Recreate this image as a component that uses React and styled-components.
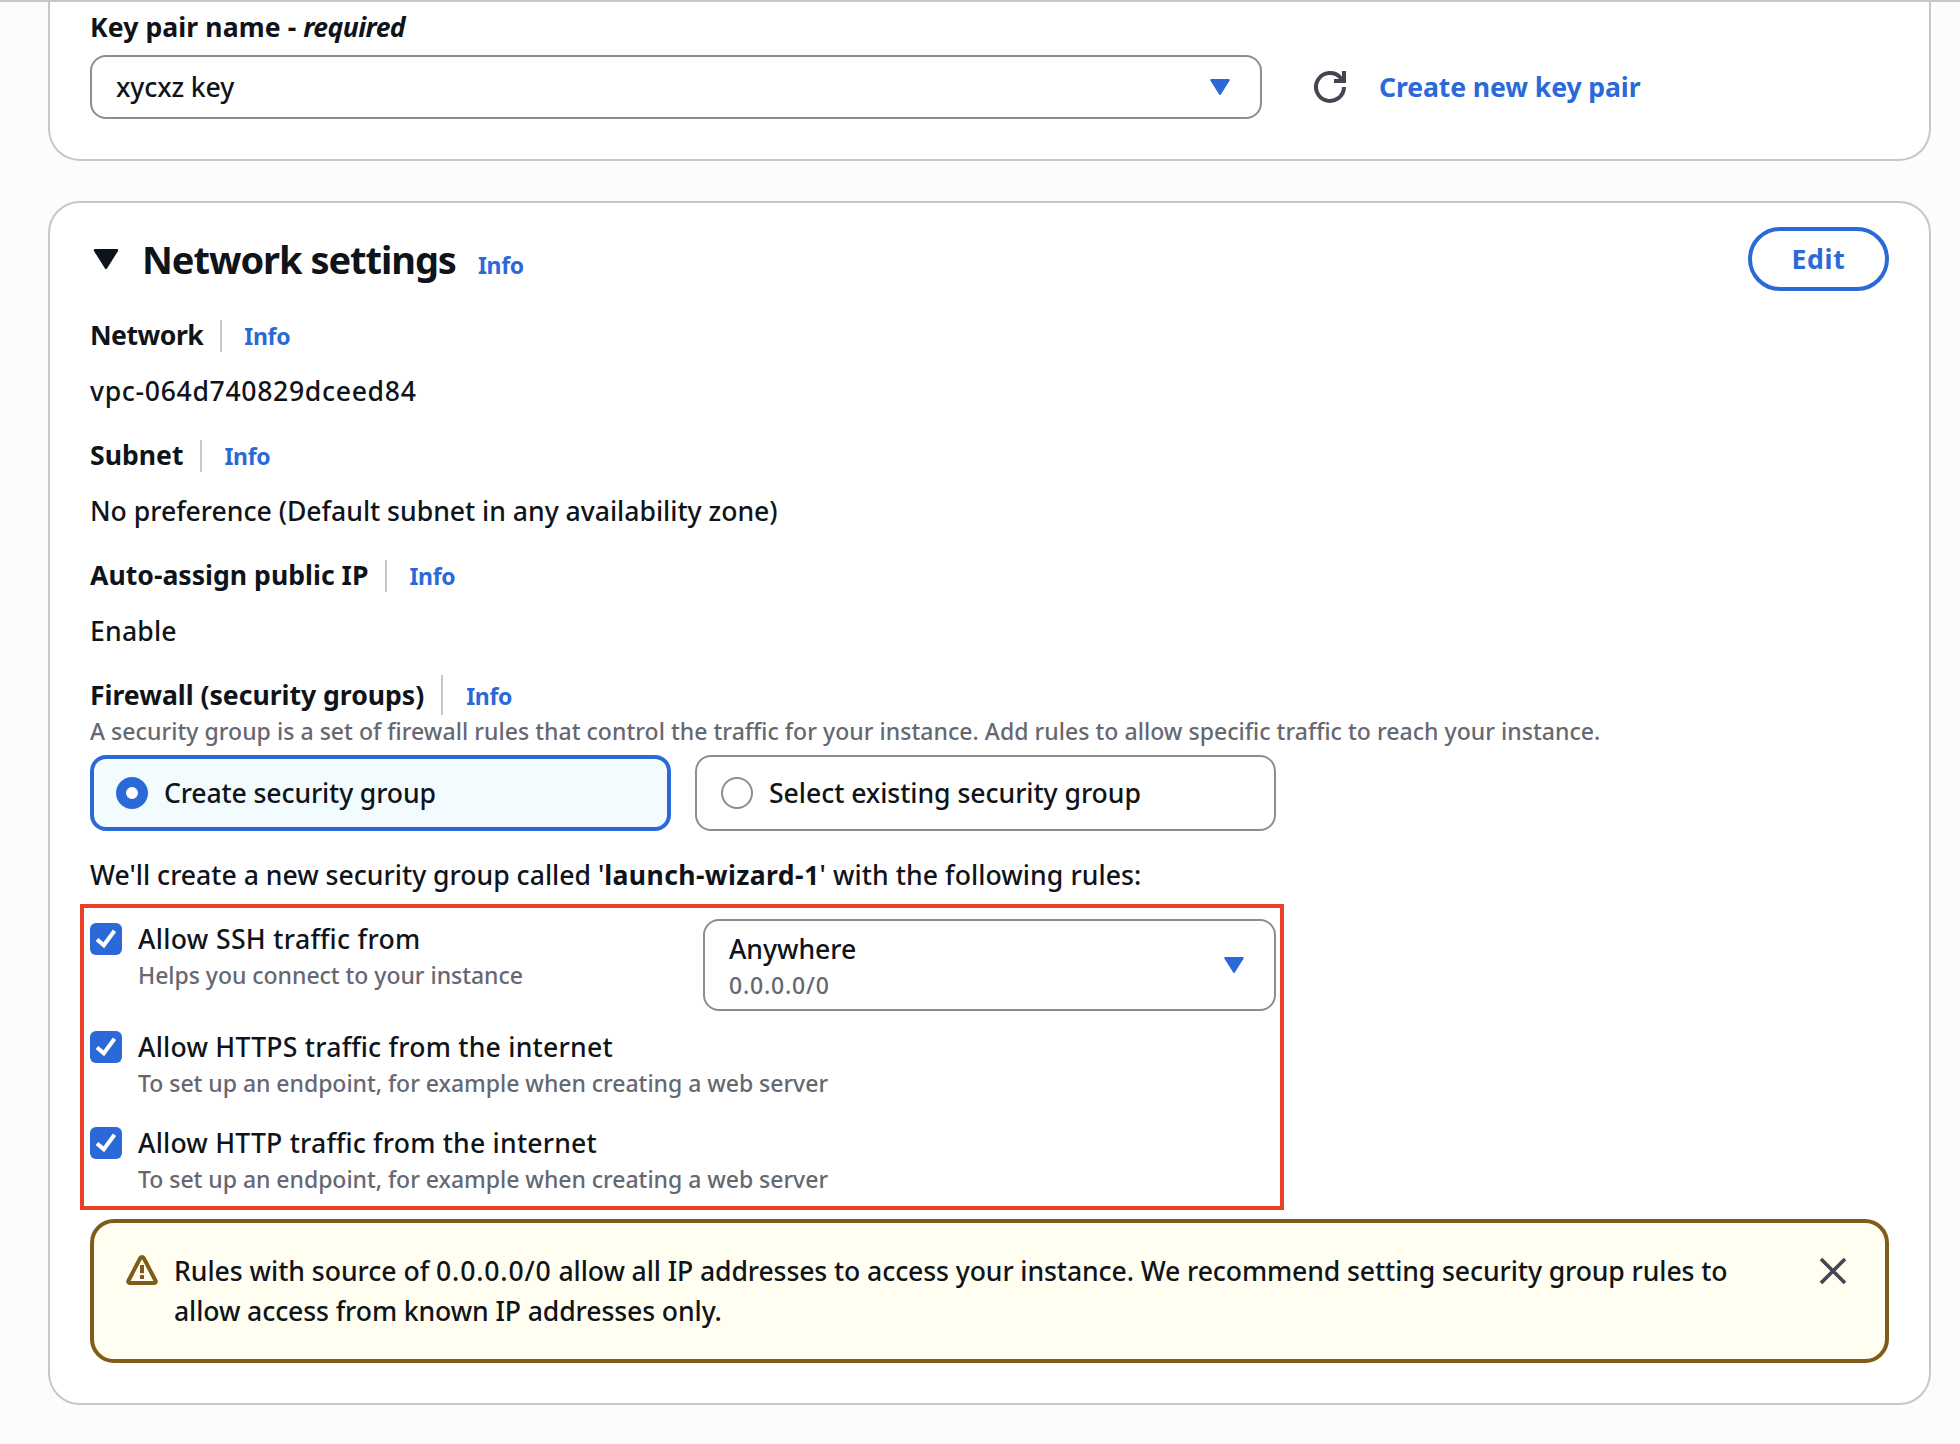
import React from "react";
import styled, { createGlobalStyle } from "styled-components";

const blue = "#2b69d9";
const ink = "#0f141a";
const line = "#c6c6cd";
const control = "#8c8c94";
const muted = "#656871";

const GlobalStyle = createGlobalStyle`
  * { box-sizing: border-box; }
  body {
    margin: 0;
    background: #fcfcfc;
    color: ${ink};
    font-family: "Noto Sans", "Open Sans", sans-serif;
    font-feature-settings: "liga" 1;
    overflow: hidden;
  }
`;

const Page = styled.main`
  height: 1444px;
  display: flex;
  flex-direction: column;
  gap: 40px;
  padding: 0 30px 0 48px;
  border-top: 2px solid ${line};
`;

const Card = styled.section`
  background: #fff;
  border: 2px solid ${line};
  border-radius: 32px;
  padding: 0 40px;
  width: 1883px;
`;

const KeyPairCard = styled(Card)`
  height: 159px;
  border-top: 0;
  border-top-left-radius: 0;
  border-top-right-radius: 0;
`;

const NetworkCard = styled(Card)`
  height: 1204px;
  padding-top: 24px;
`;

const Text = styled.span`
  font-size: 26.6px;
  font-weight: ${(p) => p.$weight || 500};
  line-height: ${(p) => p.$lh || 40}px;
  letter-spacing: ${(p) => p.$ls || 0}px;
  color: ${(p) => p.$color || ink};
  white-space: nowrap;
`;

const Tracked = styled.span`
  letter-spacing: ${(p) => p.$ls}px;
`;

const Label = styled(Text).attrs({ as: "div" })`
  font-weight: 700;
`;

const Hint = styled(Text).attrs({ as: "div" })`
  font-size: 23px;
  line-height: 32px;
  color: ${muted};
`;

const InfoLink = styled.a`
  padding-top: 2px;
  font-size: 23px;
  line-height: 32px;
  font-weight: 700;
  letter-spacing: -0.3px;
  color: ${blue};
`;

const KeyLabel = styled(Label)`
  padding-top: 5px;
  height: 53px;
`;

const Required = styled.em`
  letter-spacing: -0.6px;
`;

const Row = styled.div`
  display: flex;
  align-items: center;
`;

const SelectBox = styled.div`
  display: flex;
  align-items: center;
  justify-content: space-between;
  width: ${(p) => p.$w}px;
  height: ${(p) => p.$h}px;
  padding: 0 30px 0 24px;
  background: #fff;
  border: 2px solid ${control};
  border-radius: 16px;
`;

const RefreshButton = styled.button`
  display: flex;
  margin: 0 33px 0 52px;
  padding: 0;
  border: 0;
  background: none;
`;

const Header = styled.header`
  display: flex;
  align-items: center;
  height: 64px;
`;

const Title = styled.h2`
  margin: 0 22px 0 20px;
  font-size: 38px;
  line-height: 48px;
  font-weight: 700;
  letter-spacing: -1.05px;
`;

const HeaderInfo = styled(InfoLink)`
  margin-top: 10px;
`;

const EditButton = styled.button`
  margin-left: auto;
  width: 141px;
  height: 64px;
  border: 4px solid ${blue};
  border-radius: 32px;
  background: #fff;
  color: ${blue};
  font: 700 26.6px/40px "Noto Sans", sans-serif;
  letter-spacing: 0.7px;
`;

const Field = styled.div`
  display: flex;
  flex-direction: column;
  gap: 16px;
  height: 120px;
`;

const LabelRow = styled.div`
  display: flex;
  align-items: center;
  height: 40px;
`;

const Divider = styled.i`
  width: 2px;
  height: ${(p) => (p.$tall ? 40 : 32)}px;
  margin: ${(p) => (p.$tall ? "0 23px 0 17px" : "2px 22px 0 17px")};
  background: ${line};
`;

const Fields = styled.div`
  padding-top: 24px;
`;

const Tiles = styled.div`
  display: grid;
  grid-template-columns: 581px 581px;
  gap: 24px;
  margin-top: 8px;
`;

const Tile = styled.label`
  display: flex;
  align-items: center;
  gap: 16px;
  height: 76px;
  padding-left: ${(p) => (p.$on ? 22 : 24)}px;
  border: ${(p) => (p.$on ? `4px solid ${blue}` : `2px solid ${control}`)};
  border-radius: 16px;
  background: ${(p) => (p.$on ? "#f2fcff" : "#fff")};
`;

const Radio = styled.span`
  width: 32px;
  height: 32px;
  border-radius: 50%;
  border: ${(p) => (p.$on ? `10px solid ${blue}` : `2px solid ${control}`)};
  background: #fff;
`;

const Summary = styled(Text).attrs({ as: "p" })`
  margin: 24px 0;
`;

const Rules = styled.div`
  position: relative;
  width: 1186px;
  height: 300px;
`;

const Highlight = styled.div`
  position: absolute;
  left: -10px;
  top: -15px;
  width: 1204px;
  height: 306px;
  border: 4px solid #eb3f25;
`;

const RuleRow = styled.div`
  display: flex;
  justify-content: space-between;
  height: ${(p) => p.$h}px;
`;

const Rule = styled.label`
  display: flex;
  gap: 16px;
  padding-top: ${(p) => p.$top || 0}px;
`;

const RuleText = styled.span`
  display: flex;
  flex-direction: column;
  margin-top: -4px;
`;

const Box = styled.span`
  display: flex;
  width: 32px;
  height: 32px;
  border-radius: 6px;
  background: ${blue};
`;

const Stack = styled.div`
  display: flex;
  flex-direction: column;
`;

const Alert = styled.div`
  display: flex;
  align-items: flex-start;
  width: 1799px;
  height: 144px;
  padding: 28px 36px 0 32px;
  border: 4px solid #7f5c1a;
  border-radius: 24px;
  background: #fffef0;
`;

const AlertText = styled.div`
  display: flex;
  flex-direction: column;
  margin-left: 16px;
  flex: 1;
`;

const IconSlot = styled.span`
  display: flex;
  padding-top: 4px;
`;

const Caret = ({ w = 20, h = 16, color = blue }) => (
  <svg width={w} height={h} viewBox="0 0 20 16">
    <path d="M1.2 1h17.6L10 15z" fill={color} stroke={color} strokeWidth="2" strokeLinejoin="round" />
  </svg>
);

const RefreshIcon = () => (
  <svg width="32" height="34" viewBox="0 0 32 34" fill="none" stroke="#424650" strokeWidth="4">
    <path d="M30 17a14 14 0 1 1-3.5-9.3L29 11M30 1v10H20" />
  </svg>
);

const CheckIcon = () => (
  <svg width="32" height="32" viewBox="0 0 32 32" fill="none" stroke="#fff" strokeWidth="4">
    <path d="M7 16.5L13.8 22.3L24.5 7.8" />
  </svg>
);

const WarningIcon = () => (
  <svg width="32" height="32" viewBox="0 0 32 32" fill="none" stroke="#7f5c1a" strokeWidth="4" strokeLinejoin="round">
    <path d="M14.3 3a2 2 0 0 1 3.4 0L29.7 26a1.4 1.4 0 0 1-1.2 2H3.5a1.4 1.4 0 0 1-1.2-2z" />
    <path d="M16 10v8.3M16 20v4" />
  </svg>
);

const CloseIcon = () => (
  <svg width="32" height="32" viewBox="0 0 32 32" stroke="#424650" strokeWidth="3.6">
    <path d="M4 4l24 24M28 4L4 28" />
  </svg>
);

const fields = [
  { label: "Network", labelLs: -0.5, value: "vpc-064d740829dceed84", ls: 0.67 },
  { label: "Subnet", labelLs: 0, value: "No preference (Default subnet in any availability zone)", ls: -0.02 },
  { label: "Auto-assign public IP", labelLs: 0.01, value: "Enable", ls: 0.2 },
];

const RuleItem = ({ label, hint, top, ls }) => (
  <Rule $top={top}>
    <Box><CheckIcon /></Box>
    <RuleText>
      <Text $ls={ls}>{label}</Text>
      <Hint $ls={-0.03}>{hint}</Hint>
    </RuleText>
  </Rule>
);

export default function App() {
  return (
    <>
      <GlobalStyle />
      <Page>
        <KeyPairCard>
          <KeyLabel $ls={0.08}>Key pair name - <Required>required</Required></KeyLabel>
          <Row>
            <SelectBox $w={1172} $h={64}>
              <Text $ls={-0.12}>xycxz key</Text>
              <Caret />
            </SelectBox>
            <RefreshButton><RefreshIcon /></RefreshButton>
            <Text $weight={700} $color={blue} $ls={-0.1}>Create new key pair</Text>
          </Row>
        </KeyPairCard>
        <NetworkCard>
          <Header>
            <Caret w={32} h={20} color={ink} />
            <Title>Network settings</Title>
            <HeaderInfo>Info</HeaderInfo>
            <EditButton>Edit</EditButton>
          </Header>
          <Fields>
            {fields.map((f) => (
              <Field key={f.label}>
                <LabelRow>
                  <Label $ls={f.labelLs}>{f.label}</Label>
                  <Divider />
                  <InfoLink>Info</InfoLink>
                </LabelRow>
                <Text $ls={f.ls}>{f.value}</Text>
              </Field>
            ))}
          </Fields>
          <LabelRow>
            <Label $ls={-0.02}>Firewall (security groups)</Label>
            <Divider $tall />
            <InfoLink>Info</InfoLink>
          </LabelRow>
          <Hint $ls={0.04}>A security group is a set of firewall rules that control the traffic for your instance. Add rules to allow specific traffic to reach your instance.</Hint>
          <Tiles>
            <Tile $on>
              <Radio $on />
              <Text $ls={-0.13}>Create security group</Text>
            </Tile>
            <Tile>
              <Radio />
              <Text $ls={-0.05}>Select existing security group</Text>
            </Tile>
          </Tiles>
          <Summary>
            We'll create a new security group called '<Tracked as="b" $ls={0.38}>launch-wizard-1</Tracked>
            <Tracked $ls={0.08}>' with the following rules:</Tracked>
          </Summary>
          <Rules>
            <RuleRow $h={112}>
              <RuleItem top={4} ls={0.34} label="Allow SSH traffic from" hint="Helps you connect to your instance" />
              <SelectBox $w={573} $h={92}>
                <Stack>
                  <Text $lh={39} $ls={-0.05}>Anywhere</Text>
                  <Hint $ls={0.8}>0.0.0.0/0</Hint>
                </Stack>
                <Caret />
              </SelectBox>
            </RuleRow>
            <RuleRow $h={96}>
              <RuleItem ls={0.24} label="Allow HTTPS traffic from the internet" hint="To set up an endpoint, for example when creating a web server" />
            </RuleRow>
            <RuleRow $h={92}>
              <RuleItem ls={0.21} label="Allow HTTP traffic from the internet" hint="To set up an endpoint, for example when creating a web server" />
            </RuleRow>
            <Highlight />
          </Rules>
          <Alert>
            <IconSlot><WarningIcon /></IconSlot>
            <AlertText>
              <Text $ls={-0.1}>
                <Tracked $ls={-0.03}>Rules with source of </Tracked>
                <Tracked $ls={0.85}>0.0.0.0/0</Tracked> allow all IP addresses to access your instance. We recommend setting security group rules to
              </Text>
              <Text $ls={-0.1}>allow access from known IP addresses only.</Text>
            </AlertText>
            <IconSlot><CloseIcon /></IconSlot>
          </Alert>
        </NetworkCard>
      </Page>
    </>
  );
}
